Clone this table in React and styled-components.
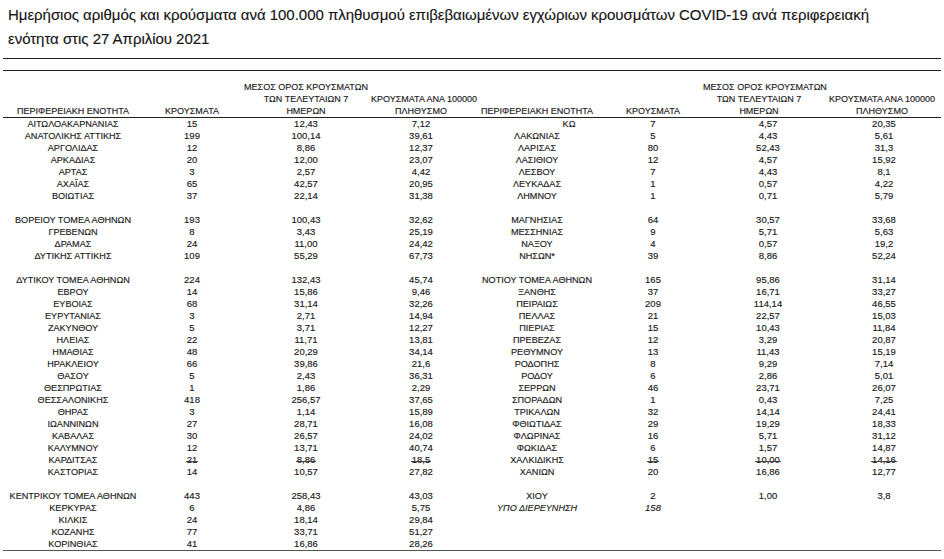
import React from "react";
import styled, { createGlobalStyle } from "styled-components";

const GlobalStyle = createGlobalStyle`
  html, body {
    margin: 0;
    padding: 0;
    background: #ffffff;
    overflow: hidden;
  }
  body {
    font-family: "Liberation Sans", Arial, sans-serif;
    color: #111;
  }
`;

const Page = styled.div`
  width: 944px;
  height: 559px;
  box-sizing: border-box;
`;

const Title = styled.h1`
  margin: 0;
  padding: 3px 8px 0;
  height: 48px;
  font-family: "Liberation Sans", Arial, sans-serif;
  font-size: 15px;
  font-weight: normal;
  line-height: 24px;
  letter-spacing: -0.03px;
  color: #151515;
  -webkit-text-stroke: 0.15px #151515;
  white-space: nowrap;
`;

const Sheet = styled.div`
  margin-left: 3px;
  width: 938px;
`;

const Rule = styled.div`
  height: 1px;
  background: #222;
  margin-top: ${(p) => p.$gap}px;
`;

const cols = "140px 98px 130px 100px 132px 100px 112px 126px";

const HeaderRow = styled.div`
  display: grid;
  grid-template-columns: ${cols};
  height: 46px;
  border-bottom: 1px solid #222;
  align-items: end;
`;

const HeadCell = styled.div`
  font-size: 9px;
  line-height: 12px;
  text-align: center;
  white-space: nowrap;
  padding-left: ${(p) => p.$shift || 0}px;
  color: #1a1a1a;
  -webkit-text-stroke: 0.15px #1a1a1a;
`;

const Body = styled.div`
  border-bottom: 1px solid #555;
`;

const Row = styled.div`
  display: grid;
  grid-template-columns: ${cols};
  height: 12px;
  align-items: center;
`;

const Cell = styled.div`
  font-size: ${(p) => (p.$num ? "9.5px" : "9.1px")};
  line-height: 12px;
  text-align: center;
  white-space: nowrap;
  padding-left: ${(p) => p.$shift || 0}px;
  font-style: ${(p) => (p.$italic ? "italic" : "normal")};
  color: #1a1a1a;
  -webkit-text-stroke: 0.15px #1a1a1a;

  span {
    position: relative;
  }
  span::after {
    content: "";
    display: ${(p) => (p.$struck ? "block" : "none")};
    position: absolute;
    left: -1px;
    right: -1px;
    top: 62%;
    height: 1px;
    background: #444;
  }
`;

const left = [
  ["ΑΙΤΩΛΟΑΚΑΡΝΑΝΙΑΣ", "15", "12,43", "7,12"],
  ["ΑΝΑΤΟΛΙΚΗΣ ΑΤΤΙΚΗΣ", "199", "100,14", "39,61"],
  ["ΑΡΓΟΛΙΔΑΣ", "12", "8,86", "12,37"],
  ["ΑΡΚΑΔΙΑΣ", "20", "12,00", "23,07"],
  ["ΑΡΤΑΣ", "3", "2,57", "4,42"],
  ["ΑΧΑΪΑΣ", "65", "42,57", "20,95"],
  ["ΒΟΙΩΤΙΑΣ", "37", "22,14", "31,38"],
  null,
  ["ΒΟΡΕΙΟΥ ΤΟΜΕΑ ΑΘΗΝΩΝ", "193", "100,43", "32,62"],
  ["ΓΡΕΒΕΝΩΝ", "8", "3,43", "25,19"],
  ["ΔΡΑΜΑΣ", "24", "11,00", "24,42"],
  ["ΔΥΤΙΚΗΣ ΑΤΤΙΚΗΣ", "109", "55,29", "67,73"],
  null,
  ["ΔΥΤΙΚΟΥ ΤΟΜΕΑ ΑΘΗΝΩΝ", "224", "132,43", "45,74"],
  ["ΕΒΡΟΥ", "14", "15,86", "9,46"],
  ["ΕΥΒΟΙΑΣ", "68", "31,14", "32,26"],
  ["ΕΥΡΥΤΑΝΙΑΣ", "3", "2,71", "14,94"],
  ["ΖΑΚΥΝΘΟΥ", "5", "3,71", "12,27"],
  ["ΗΛΕΙΑΣ", "22", "11,71", "13,81"],
  ["ΗΜΑΘΙΑΣ", "48", "20,29", "34,14"],
  ["ΗΡΑΚΛΕΙΟΥ", "66", "39,86", "21,6"],
  ["ΘΑΣΟΥ", "5", "2,43", "36,31"],
  ["ΘΕΣΠΡΩΤΙΑΣ", "1", "1,86", "2,29"],
  ["ΘΕΣΣΑΛΟΝΙΚΗΣ", "418", "256,57", "37,65"],
  ["ΘΗΡΑΣ", "3", "1,14", "15,89"],
  ["ΙΩΑΝΝΙΝΩΝ", "27", "28,71", "16,08"],
  ["ΚΑΒΑΛΑΣ", "30", "26,57", "24,02"],
  ["ΚΑΛΥΜΝΟΥ", "12", "13,71", "40,74"],
  ["ΚΑΡΔΙΤΣΑΣ", "21", "8,86", "18,5", { struck: true }],
  ["ΚΑΣΤΟΡΙΑΣ", "14", "10,57", "27,82"],
  null,
  ["ΚΕΝΤΡΙΚΟΥ ΤΟΜΕΑ ΑΘΗΝΩΝ", "443", "258,43", "43,03"],
  ["ΚΕΡΚΥΡΑΣ", "6", "4,86", "5,75"],
  ["ΚΙΛΚΙΣ", "24", "18,14", "29,84"],
  ["ΚΟΖΑΝΗΣ", "77", "33,71", "51,27"],
  ["ΚΟΡΙΝΘΙΑΣ", "41", "16,86", "28,26"],
];

const right = [
  ["ΚΩ", "7", "4,57", "20,35", { nameShift: 64 }],
  ["ΛΑΚΩΝΙΑΣ", "5", "4,43", "5,61"],
  ["ΛΑΡΙΣΑΣ", "80", "52,43", "31,3"],
  ["ΛΑΣΙΘΙΟΥ", "12", "4,57", "15,92"],
  ["ΛΕΣΒΟΥ", "7", "4,43", "8,1"],
  ["ΛΕΥΚΑΔΑΣ", "1", "0,57", "4,22"],
  ["ΛΗΜΝΟΥ", "1", "0,71", "5,79"],
  null,
  ["ΜΑΓΝΗΣΙΑΣ", "64", "30,57", "33,68"],
  ["ΜΕΣΣΗΝΙΑΣ", "9", "5,71", "5,63"],
  ["ΝΑΞΟΥ", "4", "0,57", "19,2"],
  ["ΝΗΣΩΝ*", "39", "8,86", "52,24"],
  null,
  ["ΝΟΤΙΟΥ ΤΟΜΕΑ ΑΘΗΝΩΝ", "165", "95,86", "31,14"],
  ["ΞΑΝΘΗΣ", "37", "16,71", "33,27"],
  ["ΠΕΙΡΑΙΩΣ", "209", "114,14", "46,55"],
  ["ΠΕΛΛΑΣ", "21", "22,57", "15,03"],
  ["ΠΙΕΡΙΑΣ", "15", "10,43", "11,84"],
  ["ΠΡΕΒΕΖΑΣ", "12", "3,29", "20,87"],
  ["ΡΕΘΥΜΝΟΥ", "13", "11,43", "15,19"],
  ["ΡΟΔΟΠΗΣ", "8", "9,29", "7,14"],
  ["ΡΟΔΟΥ", "6", "2,86", "5,01"],
  ["ΣΕΡΡΩΝ", "46", "23,71", "26,07"],
  ["ΣΠΟΡΑΔΩΝ", "1", "0,43", "7,25"],
  ["ΤΡΙΚΑΛΩΝ", "32", "14,14", "24,41"],
  ["ΦΘΙΩΤΙΔΑΣ", "29", "19,29", "18,33"],
  ["ΦΛΩΡΙΝΑΣ", "16", "5,71", "31,12"],
  ["ΦΩΚΙΔΑΣ", "6", "1,57", "14,87"],
  ["ΧΑΛΚΙΔΙΚΗΣ", "15", "10,00", "14,16", { struck: true }],
  ["ΧΑΝΙΩΝ", "20", "16,86", "12,77"],
  null,
  ["ΧΙΟΥ", "2", "1,00", "3,8"],
  ["ΥΠΟ ΔΙΕΡΕΥΝΗΣΗ", "158", "", "", { italic: true }],
  null,
  null,
  null,
];

// one half of a row: region, cases, 7-day average, per 100k
const Half = ({ item, avgShift = 0, lastShift = 0 }) => {
  if (!item) {
    return (
      <>
        <Cell />
        <Cell />
        <Cell />
        <Cell $shift={lastShift} />
      </>
    );
  }
  const [name, cases, avg, per, opts = {}] = item;
  return (
    <>
      <Cell $shift={opts.nameShift} $italic={opts.italic}>
        {name}
      </Cell>
      <Cell $num $italic={opts.italic} $struck={opts.struck}>
        <span>{cases}</span>
      </Cell>
      <Cell $num $shift={avgShift} $struck={opts.struck}>
        <span>{avg}</span>
      </Cell>
      <Cell $num $shift={lastShift} $struck={opts.struck}>
        <span>{per}</span>
      </Cell>
    </>
  );
};

const HeadHalf = ({ lastShift = 0 }) => (
  <>
    <HeadCell>ΠΕΡΙΦΕΡΕΙΑΚΗ ΕΝΟΤΗΤΑ</HeadCell>
    <HeadCell>ΚΡΟΥΣΜΑΤΑ</HeadCell>
    <HeadCell>
      ΜΕΣΟΣ ΟΡΟΣ ΚΡΟΥΣΜΑΤΩΝ
      <br />
      ΤΩΝ ΤΕΛΕΥΤΑΙΩΝ 7
      <br />
      ΗΜΕΡΩΝ
    </HeadCell>
    <HeadCell $shift={lastShift}>
      ΚΡΟΥΣΜΑΤΑ ΑΝΑ 100000
      <br />
      ΠΛΗΘΥΣΜΟ
    </HeadCell>
  </>
);

const App = () => {
  return (
    <Page>
      <GlobalStyle />
      <Title>
        Ημερήσιος αριθμός και κρούσματα ανά 100.000 πληθυσμού επιβεβαιωμένων
        εγχώριων κρουσμάτων COVID-19 ανά περιφερειακή
        <br />
        ενότητα στις 27 Απριλίου 2021
      </Title>
      <Sheet>
        <Rule $gap={7} />
        <Rule $gap={11} />
        <HeaderRow>
          <HeadHalf />
          <HeadHalf lastShift={8} />
        </HeaderRow>
        <Body>
          {left.map((item, i) => (
            <Row key={i}>
              <Half item={item} />
              <Half item={right[i]} avgShift={18} lastShift={12} />
            </Row>
          ))}
        </Body>
      </Sheet>
    </Page>
  );
};

export default App;
